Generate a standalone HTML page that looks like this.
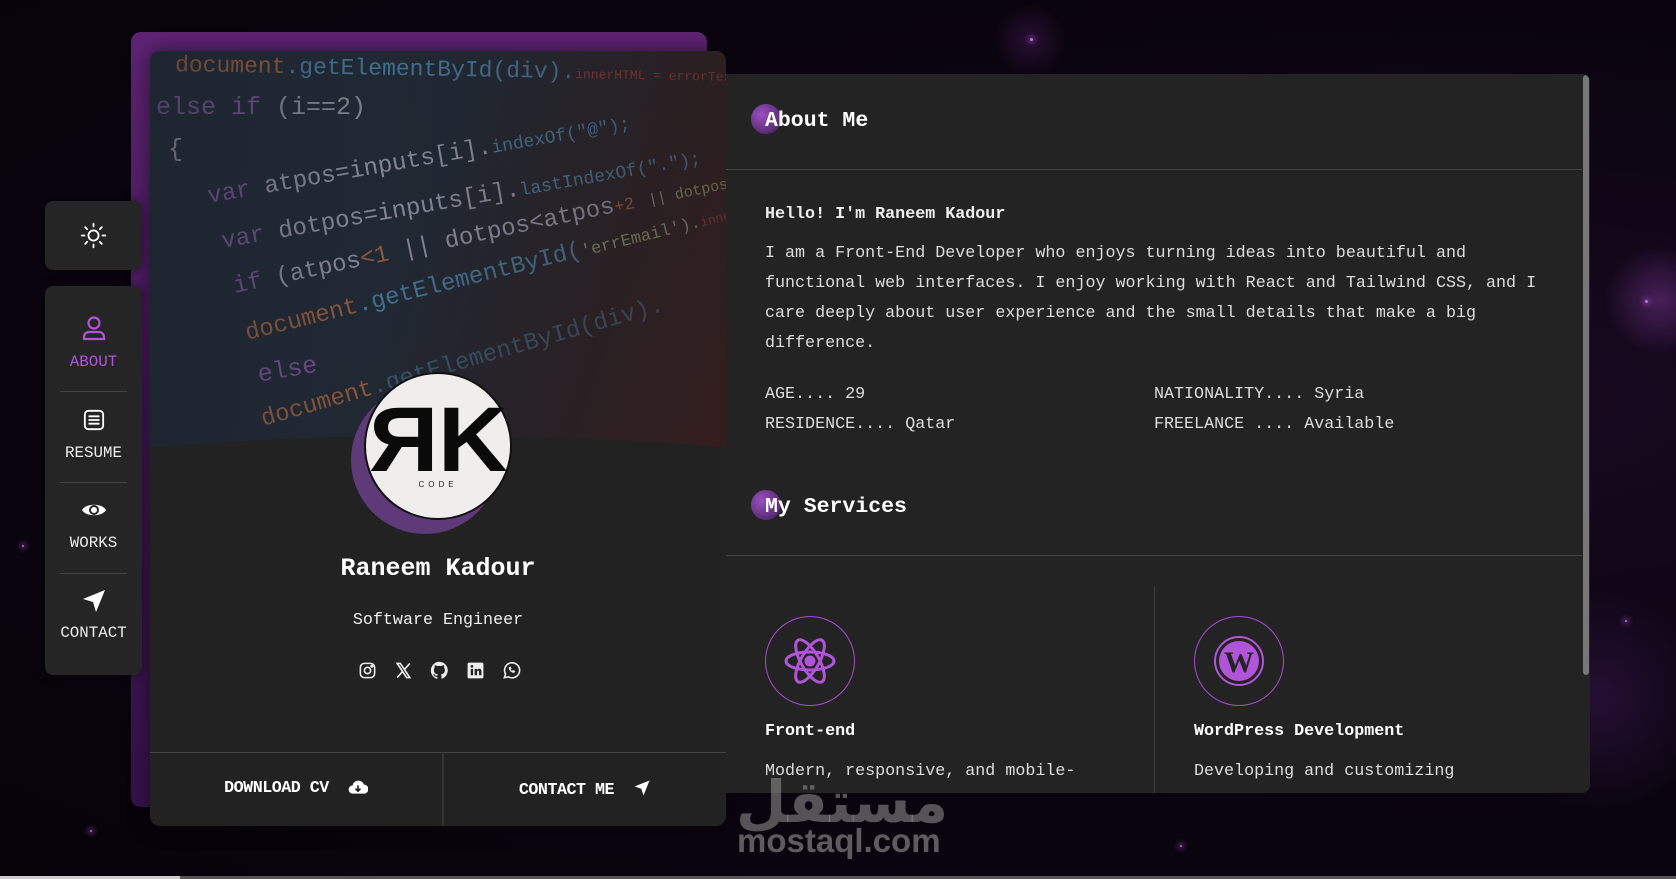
<!DOCTYPE html>
<html><head><meta charset="utf-8">
<style>
*{margin:0;padding:0;box-sizing:border-box}
body{width:1676px;height:879px;overflow:hidden;position:relative;font-family:"Liberation Mono",monospace;color:#e8e8e8;
background:
radial-gradient(circle at 180px 240px,rgba(190,90,220,.3) 0,transparent 14px),
radial-gradient(circle at 1660px 300px,rgba(190,90,230,.3) 0,transparent 55px),
radial-gradient(circle at 1600px 700px,rgba(150,60,200,.18) 0,transparent 110px),
radial-gradient(circle at 1030px 40px,rgba(170,60,200,.18) 0,transparent 35px),
radial-gradient(ellipse at 1400px 400px,#1a0922 0,#0c0512 45%,#070309 100%);}
.star{position:absolute;width:3px;height:3px;border-radius:50%;background:#c070e0;box-shadow:0 0 6px 2px rgba(190,100,230,.5)}
.back{position:absolute;left:131px;top:32px;width:576px;height:775px;border-radius:10px;background:linear-gradient(180deg,#5d2373,#3f1652 60%,#34124a)}
.card{position:absolute;left:150px;top:51px;width:576px;height:775px;border-radius:10px;background:#222;overflow:hidden;box-shadow:0 0 20px rgba(0,0,0,.5)}
.code{position:absolute;left:0;top:0;width:576px;height:440px;overflow:hidden;background:linear-gradient(110deg,#1d2733 0,#202833 45%,#2a2226 75%,#3a2020 100%)}
.code pre{position:absolute;font-family:"Liberation Mono",monospace;white-space:pre;line-height:1;opacity:.72}
.wave{position:absolute;left:-200px;top:385px;width:976px;height:400px;background:#222;border-radius:50%/ 60px 60px 0 0}
.avshadow{position:absolute;left:201px;top:335px;width:148px;height:148px;border-radius:50%;background:#5e3a78}
.av{position:absolute;left:214px;top:321px;width:148px;height:148px;border-radius:50%;background:#efeeec;border:2px solid #111;text-align:center}
.side{position:absolute;left:45px;width:97px;background:#252525;border-radius:8px;box-shadow:0 0 10px rgba(0,0,0,.5)}
.nav{position:absolute;left:0;width:97px;text-align:center;font-size:15.8px;color:#eee}
.nav svg{display:block;margin:0 auto}
.sep{position:absolute;left:15px;width:67px;height:1px;background:#444}
.right{position:absolute;left:726px;top:74px;width:864px;height:719px;background:#232323;border-radius:0 8px 8px 0;overflow:hidden}
.h2{position:absolute;font-size:21.5px;font-weight:bold;color:#fff}
.dot{position:absolute;width:30px;height:30px;border-radius:50%;background:radial-gradient(circle at 35% 35%,#9a4fc0,#5a2b74 70%,#3a2046)}
.hr{position:absolute;left:0;width:856px;height:1px;background:#444}
.p{position:absolute;font-size:16.7px;color:#ddd;line-height:30px}
.sv{position:absolute;width:90px;height:90px;border:1.5px solid #a64bd0;border-radius:50%}
</style></head><body>
<div class="star" style="left:172px;top:230px"></div>
<div class="star" style="left:22px;top:545px;width:2px;height:2px"></div>
<div class="star" style="left:1645px;top:300px"></div>
<div class="star" style="left:1580px;top:755px;width:2px;height:2px"></div>
<div class="star" style="left:1625px;top:620px;width:2px;height:2px"></div>
<div class="star" style="left:1180px;top:845px;width:2px;height:2px"></div>
<div class="star" style="left:1030px;top:38px"></div>
<div class="star" style="left:90px;top:830px;width:2px;height:2px"></div>

<div class="back"></div>
<div class="card">
 <div class="code">
  <pre style="left:25px;top:8px;font-size:23px;color:#b8693f;transform:rotate(1deg)">document<span style="color:#4f8ab0">.getElementById(div).</span><span style="color:#a04040;font-size:13px">innerHTML = errorText</span></pre>
  <pre style="left:6px;top:44px;font-size:25px;color:#8a5ca8">else if <span style="color:#9aa">(i==2)</span></pre>
  <pre style="left:18px;top:86px;font-size:25px;color:#aaa">{</pre>
  <pre style="left:58px;top:135px;font-size:24px;color:#8a5ca8;transform:rotate(-10deg);transform-origin:left">var <span style="color:#aab">atpos=inputs[i].</span><span style="color:#4f8ab0;font-size:18px">indexOf("@");</span></pre>
  <pre style="left:72px;top:180px;font-size:24px;color:#8a5ca8;transform:rotate(-10deg);transform-origin:left">var <span style="color:#aab">dotpos=inputs[i].</span><span style="color:#4f8ab0;font-size:18px">lastIndexOf(".");</span></pre>
  <pre style="left:84px;top:225px;font-size:24px;color:#8a5ca8;transform:rotate(-12deg);transform-origin:left">if <span style="color:#aab">(atpos</span><span style="color:#b8693f">&lt;1</span><span style="color:#aab"> || dotpos&lt;atpos</span><span style="color:#b8693f;font-size:17px">+2</span> <span style="color:#9a7;font-size:15px">|| dotpos+2</span></pre>
  <pre style="left:96px;top:272px;font-size:24px;color:#b8693f;transform:rotate(-14deg);transform-origin:left">document<span style="color:#4f8ab0">.getElementById(</span><span style="color:#9a7;font-size:17px">'errEmail').</span><span style="color:#a04040;font-size:13px">innerHTML</span></pre>
  <pre style="left:108px;top:312px;font-size:25px;color:#8a5ca8;transform:rotate(-10deg);transform-origin:left">else</pre>
  <pre style="left:112px;top:358px;font-size:24px;color:#b8693f;transform:rotate(-16deg);transform-origin:left">document<span style="color:#4f8ab0;opacity:.6">.getElementById(div).</span></pre>
  <div style="position:absolute;inset:0;background:linear-gradient(90deg,rgba(30,36,44,.35),transparent 40%,rgba(40,25,25,.3))"></div>
 </div>
 <div class="wave"></div>
 <div class="avshadow"></div>
 <div class="av">
  <div style="font-family:'Liberation Sans',sans-serif;font-weight:bold;font-size:92px;color:#0a0a0a;line-height:1;margin-top:20px;letter-spacing:-14px;transform:scaleX(1.05)"><span style="display:inline-block;transform:scaleX(-1)">R</span>K</div>
  <div style="font-family:'Liberation Sans',sans-serif;font-size:8px;letter-spacing:4px;color:#222;margin-top:-6px">CODE</div>
 </div>
 <div style="position:absolute;left:0;width:576px;top:503px;text-align:center;font-size:25px;font-weight:bold;color:#fff">Raneem Kadour</div>
 <div style="position:absolute;left:0;width:576px;top:560px;text-align:center;font-size:16.7px;color:#eee">Software Engineer</div>
 <div style="position:absolute;left:208px;top:610px;display:flex;gap:17px">
  <svg width="19" height="19" viewBox="0 0 24 24" fill="none" stroke="#eee" stroke-width="2"><rect x="3" y="3" width="18" height="18" rx="5"/><circle cx="12" cy="12" r="4"/><circle cx="17.5" cy="6.5" r="1" fill="#eee"/></svg>
  <svg width="19" height="19" viewBox="0 0 24 24" fill="none" stroke="#eee" stroke-width="2"><path d="M4 3h4l12 18h-4zM20 3l-7 8M4 21l7-8"/></svg>
  <svg width="19" height="19" viewBox="0 0 24 24" fill="#eee"><path d="M12 1a11 11 0 0 0-3.5 21.4c.6.1.8-.2.8-.5v-2c-3.1.7-3.8-1.3-3.8-1.3-.5-1.3-1.2-1.6-1.2-1.6-1-.7.1-.7.1-.7 1.1.1 1.7 1.1 1.7 1.1 1 1.7 2.600 1.2 3.2.9.1-.7.4-1.2.7-1.5-2.5-.3-5.1-1.2-5.1-5.5 0-1.2.4-2.2 1.1-3-.1-.3-.5-1.4.1-2.9 0 0 .9-.3 3 1.1a10 10 0 0 1 5.5 0c2.1-1.4 3-1.1 3-1.1.6 1.5.2 2.6.1 2.9.7.8 1.1 1.8 1.1 3 0 4.3-2.6 5.2-5.1 5.5.4.3.8 1 .8 2v3c0 .3.2.6.8.5A11 11 0 0 0 12 1z"/></svg>
  <svg width="19" height="19" viewBox="0 0 24 24"><rect x="2" y="2" width="20" height="20" rx="2" fill="#eee"/><rect x="6" y="10" width="3" height="8" fill="#222"/><circle cx="7.5" cy="6.8" r="1.7" fill="#222"/><path d="M11 10h3v1.3c.6-1 1.6-1.5 2.8-1.5 2 0 2.7 1.3 2.7 3.5V18h-3v-4.2c0-1-.3-1.6-1.2-1.6s-1.3.6-1.3 1.6V18h-3z" fill="#222"/></svg>
  <svg width="19" height="19" viewBox="0 0 24 24" fill="none" stroke="#eee" stroke-width="2"><path d="M3 21l1.5-4.5A9.5 9.5 0 1 1 8 20z"/><path d="M9 8.5c0 3 3 6 6 6l1-1.5-2-1-1 1c-1 0-2.5-1.5-2.5-2.5l1-1-1-2z" fill="#eee" stroke-width="1"/></svg>
 </div>
 <div style="position:absolute;left:0;top:701px;width:576px;height:1px;background:#444"></div>
 <div style="position:absolute;left:292px;top:702px;width:2px;height:73px;background:#333"></div>
 <div style="position:absolute;left:0;width:292px;top:728px;text-align:center;font-size:16.7px;font-weight:bold;color:#fff;letter-spacing:-.5px">DOWNLOAD CV &nbsp;<svg width="20" height="16" viewBox="0 0 24 18" style="vertical-align:-3px"><path d="M6 17a5 5 0 0 1-.5-10A7 7 0 0 1 19 6a5.5 5.5 0 0 1 0 11z" fill="#fff"/><path d="M12 7v7M9 11l3 3 3-3" stroke="#222" stroke-width="2" fill="none"/></svg></div>
 <div style="position:absolute;left:294px;width:282px;top:728px;text-align:center;font-size:16.7px;font-weight:bold;color:#fff;letter-spacing:-.5px">CONTACT ME &nbsp;<svg width="18" height="18" viewBox="0 0 24 24" style="vertical-align:-3px"><path d="M22 2L2 10l9 3 3 9z" fill="#fff"/></svg></div>
</div>

<div class="side" style="top:201px;height:69px">
 <svg style="position:absolute;left:35px;top:21px" width="27" height="27" viewBox="0 0 24 24" fill="none" stroke="#fff" stroke-width="1.6" stroke-linecap="round"><circle cx="12" cy="12" r="4.5"/><path d="M12 1.5v2.5M12 20v2.5M1.5 12H4M20 12h2.5M4.6 4.6l1.8 1.8M17.6 17.6l1.8 1.8M4.6 19.4l1.8-1.8M17.6 6.4l1.8-1.8"/></svg>
</div>
<div class="side" style="top:286px;height:389px">
 <div class="nav" style="top:29px;color:#b155d8"><svg width="24" height="26" viewBox="0 0 24 26" fill="none" stroke="#b155d8" stroke-width="2.2"><circle cx="12" cy="8" r="5.5"/><path d="M2 24v-2a5 5 0 0 1 5-5h10a5 5 0 0 1 5 5v2z"/></svg><div style="margin-top:12px">ABOUT</div></div>
 <div class="sep" style="top:105px"></div>
 <div class="nav" style="top:123px"><svg width="22" height="22" viewBox="0 0 24 24" fill="none" stroke="#fff" stroke-width="2"><rect x="2" y="2" width="20" height="20" rx="4"/><path d="M6 8h12M6 12h12M6 16h12"/></svg><div style="margin-top:13px">RESUME</div></div>
 <div class="sep" style="top:196px"></div>
 <div class="nav" style="top:215px"><svg width="26" height="18" viewBox="0 0 26 18"><path d="M1 9C5 2 21 2 25 9 21 16 5 16 1 9z" fill="#fff"/><circle cx="13" cy="9" r="5" fill="#252525"/><circle cx="13" cy="9" r="3" fill="#fff"/></svg><div style="margin-top:15px">WORKS</div></div>
 <div class="sep" style="top:287px"></div>
 <div class="nav" style="top:303px"><svg width="24" height="24" viewBox="0 0 24 24"><path d="M23 1L1 10l10 3 3 10z" fill="#fff"/></svg><div style="margin-top:11px">CONTACT</div></div>
</div>

<div class="right">
 <div class="dot" style="left:25px;top:30px"></div>
 <div class="h2" style="left:39px;top:35px">About Me</div>
 <div class="hr" style="top:95px"></div>
 <div class="p" style="left:39px;top:126px;font-weight:bold;color:#eee">Hello! I'm Raneem Kadour</div>
 <div class="p" style="left:39px;top:165px;width:780px">I am a Front-End Developer who enjoys turning ideas into beautiful and functional web interfaces. I enjoy working with React and Tailwind CSS, and I care deeply about user experience and the small details that make a big difference.</div>
 <div class="p" style="left:39px;top:306px">AGE.... 29<br>RESIDENCE.... Qatar</div>
 <div class="p" style="left:428px;top:306px">NATIONALITY.... Syria<br>FREELANCE .... Available</div>
 <div class="dot" style="left:25px;top:416px"></div>
 <div class="h2" style="left:39px;top:421px">My Services</div>
 <div class="hr" style="top:481px"></div>
 <div style="position:absolute;left:428px;top:512px;width:1px;height:220px;background:#3c3c3c"></div>
 <div class="sv" style="left:39px;top:542px"><svg style="position:absolute;left:17px;top:17px" width="54" height="54" viewBox="0 0 54 54" fill="none" stroke="#b155d8" stroke-width="3"><ellipse cx="27" cy="27" rx="24" ry="9"/><ellipse cx="27" cy="27" rx="24" ry="9" transform="rotate(60 27 27)"/><ellipse cx="27" cy="27" rx="24" ry="9" transform="rotate(120 27 27)"/><circle cx="27" cy="27" r="4" fill="#b155d8"/></svg></div>
 <div class="sv" style="left:468px;top:542px"><svg style="position:absolute;left:19px;top:19px" width="50" height="50" viewBox="0 0 50 50"><circle cx="25" cy="25" r="24" fill="none" stroke="#b155d8" stroke-width="2"/><circle cx="25" cy="25" r="20" fill="#b155d8"/><text x="25" y="36" text-anchor="middle" font-family="Liberation Serif,serif" font-weight="bold" font-size="30" fill="#232323">W</text></svg></div>
 <div class="p" style="left:39px;top:643px;font-weight:bold;color:#fff">Front-end</div>
 <div class="p" style="left:468px;top:643px;font-weight:bold;color:#fff">WordPress Development</div>
 <div class="p" style="left:39px;top:683px">Modern, responsive, and mobile-</div>
 <div class="p" style="left:468px;top:683px">Developing and customizing</div>
 <div style="position:absolute;left:857px;top:1px;width:6px;height:600px;border-radius:3px;background:#777"></div>
</div>

<div style="position:absolute;left:736px;top:768px;font-family:'Noto Sans CJK SC','DejaVu Sans',sans-serif;font-size:58px;font-weight:bold;color:rgba(150,150,150,.55);line-height:1">مستقل</div>
<div style="position:absolute;left:737px;top:822px;font-family:'Liberation Sans',sans-serif;font-size:33px;font-weight:bold;color:rgba(150,150,150,.6)">mostaql.com</div>
<div style="position:absolute;left:0;top:876px;width:1676px;height:3px;background:#555"></div>
<div style="position:absolute;left:0;top:876px;width:180px;height:3px;background:#ccc"></div>
</body></html>
